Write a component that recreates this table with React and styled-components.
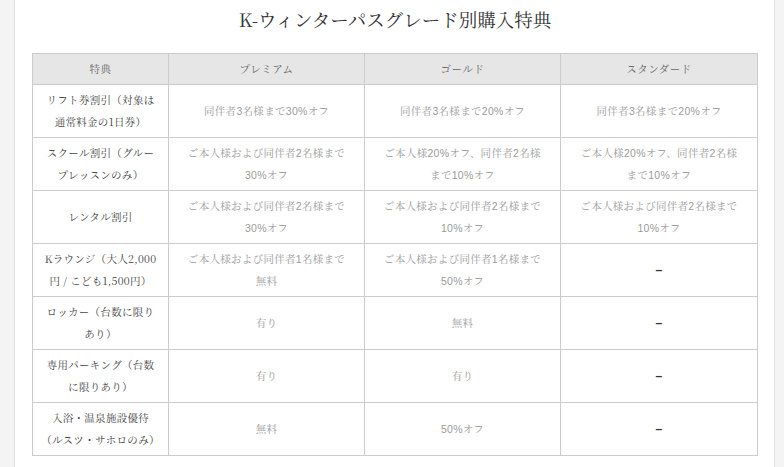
import React from "react";
import styled, { createGlobalStyle } from "styled-components";

const SERIF = `"Noto Serif CJK JP", "Liberation Serif", "Noto Sans CJK JP", serif`;

const Global = createGlobalStyle`
  html, body { margin: 0; padding: 0; background: #fff; }
  body { font-family: ${SERIF}; }
`;

const Page = styled.div`
  display: flex;
  width: 784px;
  min-height: 467px;
  overflow: hidden;
`;

const Rail = styled.div`
  flex: 0 0 ${(p) => p.$w}px;
  background: #f4f4f4;
  ${(p) => (p.$side === "left" ? "border-right" : "border-left")}: 1px solid #e2e2e2;
`;

const Main = styled.main`
  flex: 1;
  padding: 6px 16px 0 17px;
  background: #fff;
`;

const Title = styled.h1`
  margin: 0 0 21px;
  text-align: center;
  font-size: 18.5px;
  line-height: 26px;
  font-weight: normal;
  color: #333;
  font-family: ${SERIF};
`;

const Table = styled.table`
  width: 725px;
  border-collapse: collapse;
  table-layout: fixed;
  border: 1px solid #cccccc;
`;

const Th = styled.th`
  background: #e6e6e6;
  border: 1px solid #cccccc;
  font-weight: normal;
  font-size: 10.5px;
  line-height: 22px;
  padding: 4px 8px;
  color: #666;
  text-align: center;
  letter-spacing: 0.5px;
  font-family: ${SERIF};
`;

const Td = styled.td`
  border: 1px solid #cccccc;
  height: 44px;
  padding: 4px 8px;
  font-size: 10.5px;
  line-height: 22px;
  text-align: center;
  vertical-align: middle;
  color: ${(p) => (p.$label ? "#444" : "#9a9a9a")};
  font-family: ${(p) =>
    p.$label
      ? SERIF
      : `"Liberation Sans", "Noto Serif CJK JP", "Noto Sans CJK JP", sans-serif`};
  letter-spacing: 0.3px;
`;

const Dash = styled.span`
  color: #333;
  font-family: "Liberation Sans", sans-serif;
  font-size: 12px;
  font-weight: bold;
`;

const lines = (arr) =>
  arr.map((l, i) => (
    <React.Fragment key={i}>
      {i > 0 && <br />}
      {l}
    </React.Fragment>
  ));

const rows = [
  [["リフト券割引（対象は", "通常料金の1日券）"], ["同伴者3名様まで30%オフ"], ["同伴者3名様まで20%オフ"], ["同伴者3名様まで20%オフ"]],
  [["スクール割引（グルー", "プレッスンのみ）"], ["ご本人様および同伴者2名様まで", "30%オフ"], ["ご本人様20%オフ、同伴者2名様", "まで10%オフ"], ["ご本人様20%オフ、同伴者2名様", "まで10%オフ"]],
  [["レンタル割引"], ["ご本人様および同伴者2名様まで", "30%オフ"], ["ご本人様および同伴者2名様まで", "10%オフ"], ["ご本人様および同伴者2名様まで", "10%オフ"]],
  [["Kラウンジ（大人2,000", "円 / こども1,500円）"], ["ご本人様および同伴者1名様まで", "無料"], ["ご本人様および同伴者1名様まで", "50%オフ"], null],
  [["ロッカー（台数に限り", "あり）"], ["有り"], ["無料"], null],
  [["専用パーキング（台数", "に限りあり）"], ["有り"], ["有り"], null],
  [["入浴・温泉施設優待", "（ルスツ・サホロのみ）"], ["無料"], ["50%オフ"], null],
];

export default function App() {
  return (
    <>
      <Global />
      <Page>
        <Rail $w={14} $side="left" />
        <Main>
          <Title>K-ウィンターパスグレード別購入特典</Title>
          <Table>
            <colgroup>
              <col style={{ width: 136 }} />
              <col style={{ width: 196 }} />
              <col style={{ width: 196 }} />
              <col style={{ width: 197 }} />
            </colgroup>
            <thead>
              <tr>
                <Th>特典</Th>
                <Th>プレミアム</Th>
                <Th>ゴールド</Th>
                <Th>スタンダード</Th>
              </tr>
            </thead>
            <tbody>
              {rows.map((r, i) => (
                <tr key={i}>
                  {r.map((c, j) => (
                    <Td key={j} $label={j === 0}>
                      {c ? lines(c) : <Dash>–</Dash>}
                    </Td>
                  ))}
                </tr>
              ))}
            </tbody>
          </Table>
        </Main>
        <Rail $w={10} $side="right" />
      </Page>
    </>
  );
}
